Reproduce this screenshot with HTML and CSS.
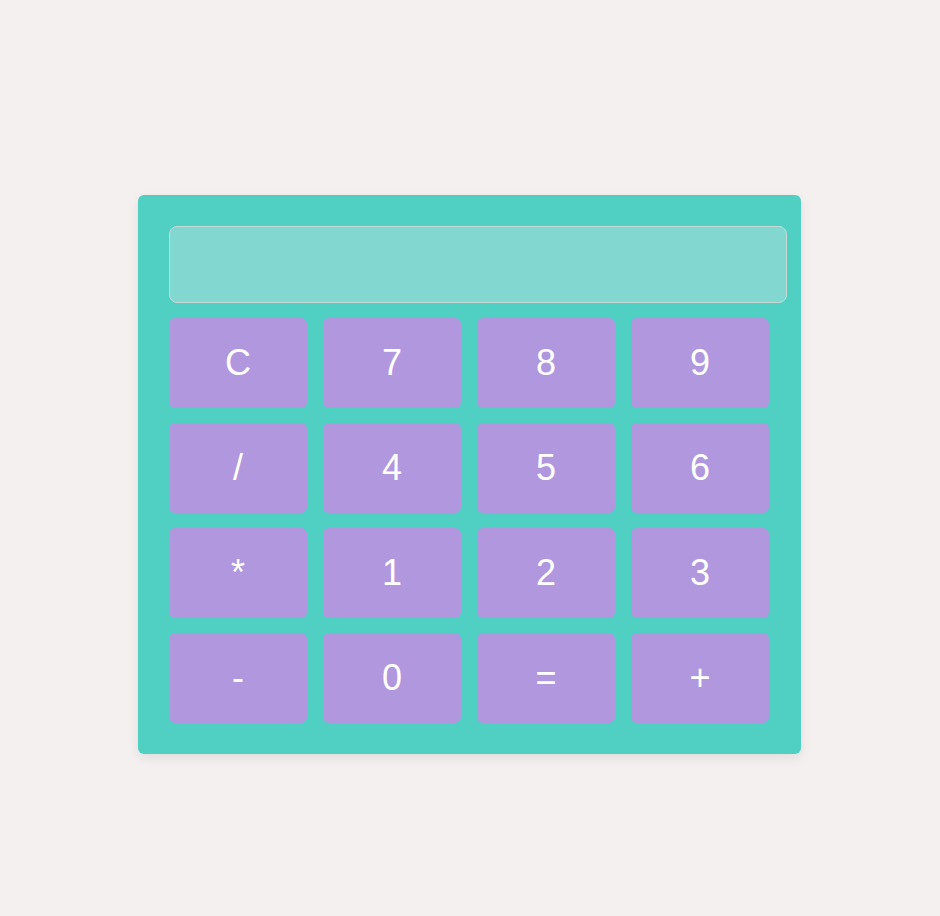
FILE: index.html
```html
<!DOCTYPE html>
<html>
<head>
<meta charset="utf-8">
<link rel="stylesheet" href="styles.css">
</head>
<body>
<div class="page">
  <div class="calculator">
    <div class="display"></div>
    <div class="keys">
      <button class="key">C</button>
      <button class="key">7</button>
      <button class="key">8</button>
      <button class="key">9</button>
      <button class="key">/</button>
      <button class="key">4</button>
      <button class="key">5</button>
      <button class="key">6</button>
      <button class="key">*</button>
      <button class="key">1</button>
      <button class="key">2</button>
      <button class="key">3</button>
      <button class="key">-</button>
      <button class="key">0</button>
      <button class="key">=</button>
      <button class="key">+</button>
    </div>
  </div>
</div>
</body>
</html>
```
FILE: styles.css
```css
html, body {
  margin: 0;
  padding: 0;
  background: #f4f0ef;
  font-family: "Liberation Sans", Arial, sans-serif;
}
.page {
  height: 916px;
  padding-top: 195px;
  padding-left: 138px;
  box-sizing: border-box;
}
.calculator {
  width: 663px;
  box-sizing: border-box;
  padding: 31px 32px 31px 31px;
  background: #50cfc3;
  border-radius: 6px;
  box-shadow: 0 4px 12px rgba(0, 0, 0, 0.08);
}
.display {
  width: 618px;
  height: 77px;
  box-sizing: border-box;
  background: #82d8d0;
  border: 1px solid #c9d9d6;
  border-radius: 8px;
  margin-bottom: 15px;
}
.keys {
  display: grid;
  grid-template-columns: repeat(4, 138px);
  grid-auto-rows: 90px;
  column-gap: 16px;
  row-gap: 15px;
}
.key {
  border: none;
  border-radius: 6px;
  background: #b197de;
  color: #ffffff;
  font-family: "Liberation Sans", Arial, sans-serif;
  font-size: 36px;
  padding: 0;
  margin: 0;
}
```
